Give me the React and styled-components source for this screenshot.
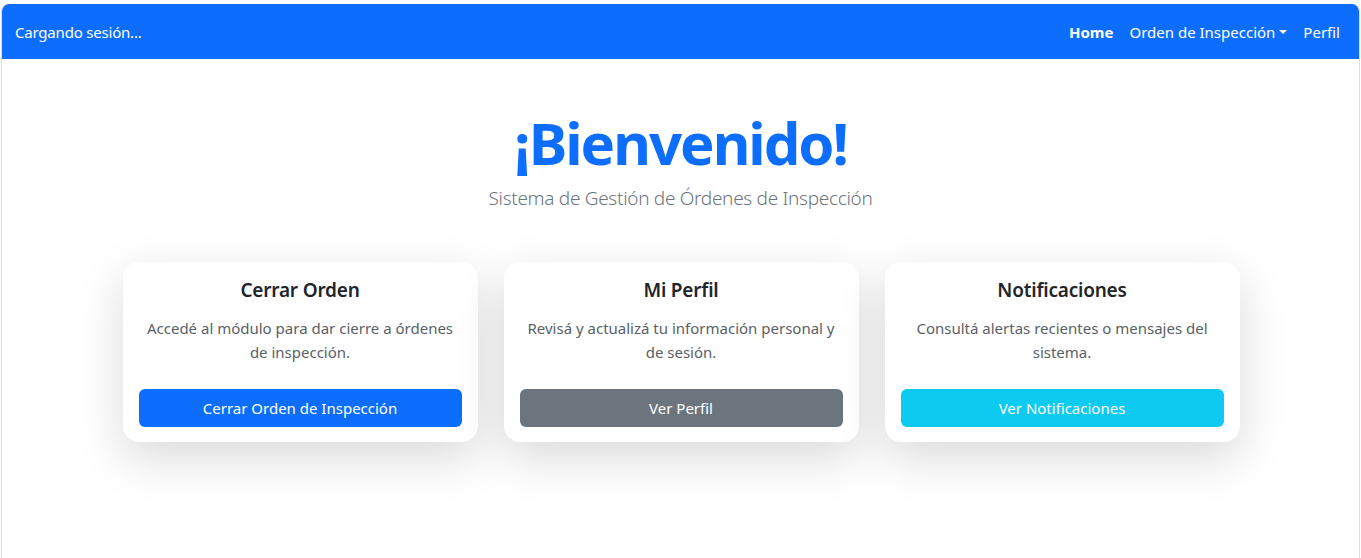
import React from 'react';
import styled, { createGlobalStyle } from 'styled-components';

const GlobalStyle = createGlobalStyle`
  html, body {
    margin: 0;
    padding: 0;
    background: #ffffff;
  }
  body {
    font-family: 'Noto Sans', 'Open Sans', 'Liberation Sans', sans-serif;
    color: #212529;
  }
`;

const Frame = styled.div`
  margin: 4px 1px 0 1px;
  height: 554px;
  box-sizing: border-box;
  border: 1px solid #dcdcdc;
  border-top: none;
  border-bottom: none;
  border-radius: 8px 8px 0 0;
  overflow: hidden;
  background: #ffffff;
`;

const Navbar = styled.nav`
  height: 55px;
  background: #0d6efd;
  display: flex;
  align-items: center;
  justify-content: space-between;
  padding: 0 19px 0 13px;
  color: #ffffff;
  font-size: 15px;
`;

const Brand = styled.div`
  letter-spacing: -0.2px;
`;

const NavLinks = styled.div`
  display: flex;
  align-items: center;
  gap: 16px;
`;

const NavLink = styled.span`
  font-weight: ${(props) => (props.active ? 700 : 400)};
  display: flex;
  align-items: center;
  letter-spacing: ${(props) => (props.active ? '0' : '0')};
`;

const Caret = styled.span`
  display: inline-block;
  margin-left: 4px;
  width: 0;
  height: 0;
  border-left: 4px solid transparent;
  border-right: 4px solid transparent;
  border-top: 4px solid #ffffff;
`;

const Main = styled.main`
  display: flex;
  flex-direction: column;
  align-items: center;
  padding-top: 48px;
`;

const Title = styled.h1`
  margin: 0;
  font-size: 58px;
  line-height: 72px;
  font-weight: 700;
  color: #0d6efd;
  letter-spacing: -2px;
`;

const Lead = styled.p`
  margin: 4px 0 0 0;
  font-size: 19px;
  line-height: 30px;
  font-weight: 300;
  color: #6c757d;
  letter-spacing: -0.3px;
`;

const Cards = styled.div`
  display: flex;
  gap: 26px;
  margin-top: 49px;
  margin-left: 1px;
`;

const Card = styled.div`
  width: 355px;
  box-sizing: border-box;
  background: #ffffff;
  border-radius: 16px;
  box-shadow: 0 16px 48px rgba(0, 0, 0, 0.15);
  padding: 16px 16px 15px;
  display: flex;
  flex-direction: column;
  align-items: center;
  text-align: center;
`;

const CardTitle = styled.h5`
  margin: 0;
  font-size: 19px;
  line-height: 24px;
  font-weight: 600;
  color: #212529;
  letter-spacing: -0.2px;
`;

const CardText = styled.p`
  margin: 14px 0 0 0;
  font-size: 15px;
  line-height: 24px;
  color: #595f66;
`;

const Button = styled.button`
  margin-top: 25px;
  width: 100%;
  height: 38px;
  border: none;
  border-radius: 6px;
  background: ${(props) => props.bg};
  color: #ffffff;
  font-family: inherit;
  font-size: 15px;
  cursor: pointer;
`;

const cards = [
  {
    title: 'Cerrar Orden',
    text: ['Accedé al módulo para dar cierre a órdenes', 'de inspección.'],
    button: 'Cerrar Orden de Inspección',
    bg: '#0d6efd',
  },
  {
    title: 'Mi Perfil',
    text: ['Revisá y actualizá tu información personal y', 'de sesión.'],
    button: 'Ver Perfil',
    bg: '#6c757d',
  },
  {
    title: 'Notificaciones',
    text: ['Consultá alertas recientes o mensajes del', 'sistema.'],
    button: 'Ver Notificaciones',
    bg: '#0dcaf0',
  },
];

export default function App() {
  return (
    <>
      <GlobalStyle />
      <Frame>
        <Navbar>
          <Brand>Cargando sesión...</Brand>
          <NavLinks>
            <NavLink active>Home</NavLink>
            <NavLink>
              Orden de Inspección
              <Caret />
            </NavLink>
            <NavLink>Perfil</NavLink>
          </NavLinks>
        </Navbar>
        <Main>
          <Title>¡Bienvenido!</Title>
          <Lead>Sistema de Gestión de Órdenes de Inspección</Lead>
          <Cards>
            {cards.map((card) => (
              <Card key={card.title}>
                <CardTitle>{card.title}</CardTitle>
                <CardText>
                  {card.text[0]}
                  <br />
                  {card.text[1]}
                </CardText>
                <Button bg={card.bg}>{card.button}</Button>
              </Card>
            ))}
          </Cards>
        </Main>
      </Frame>
    </>
  );
}
